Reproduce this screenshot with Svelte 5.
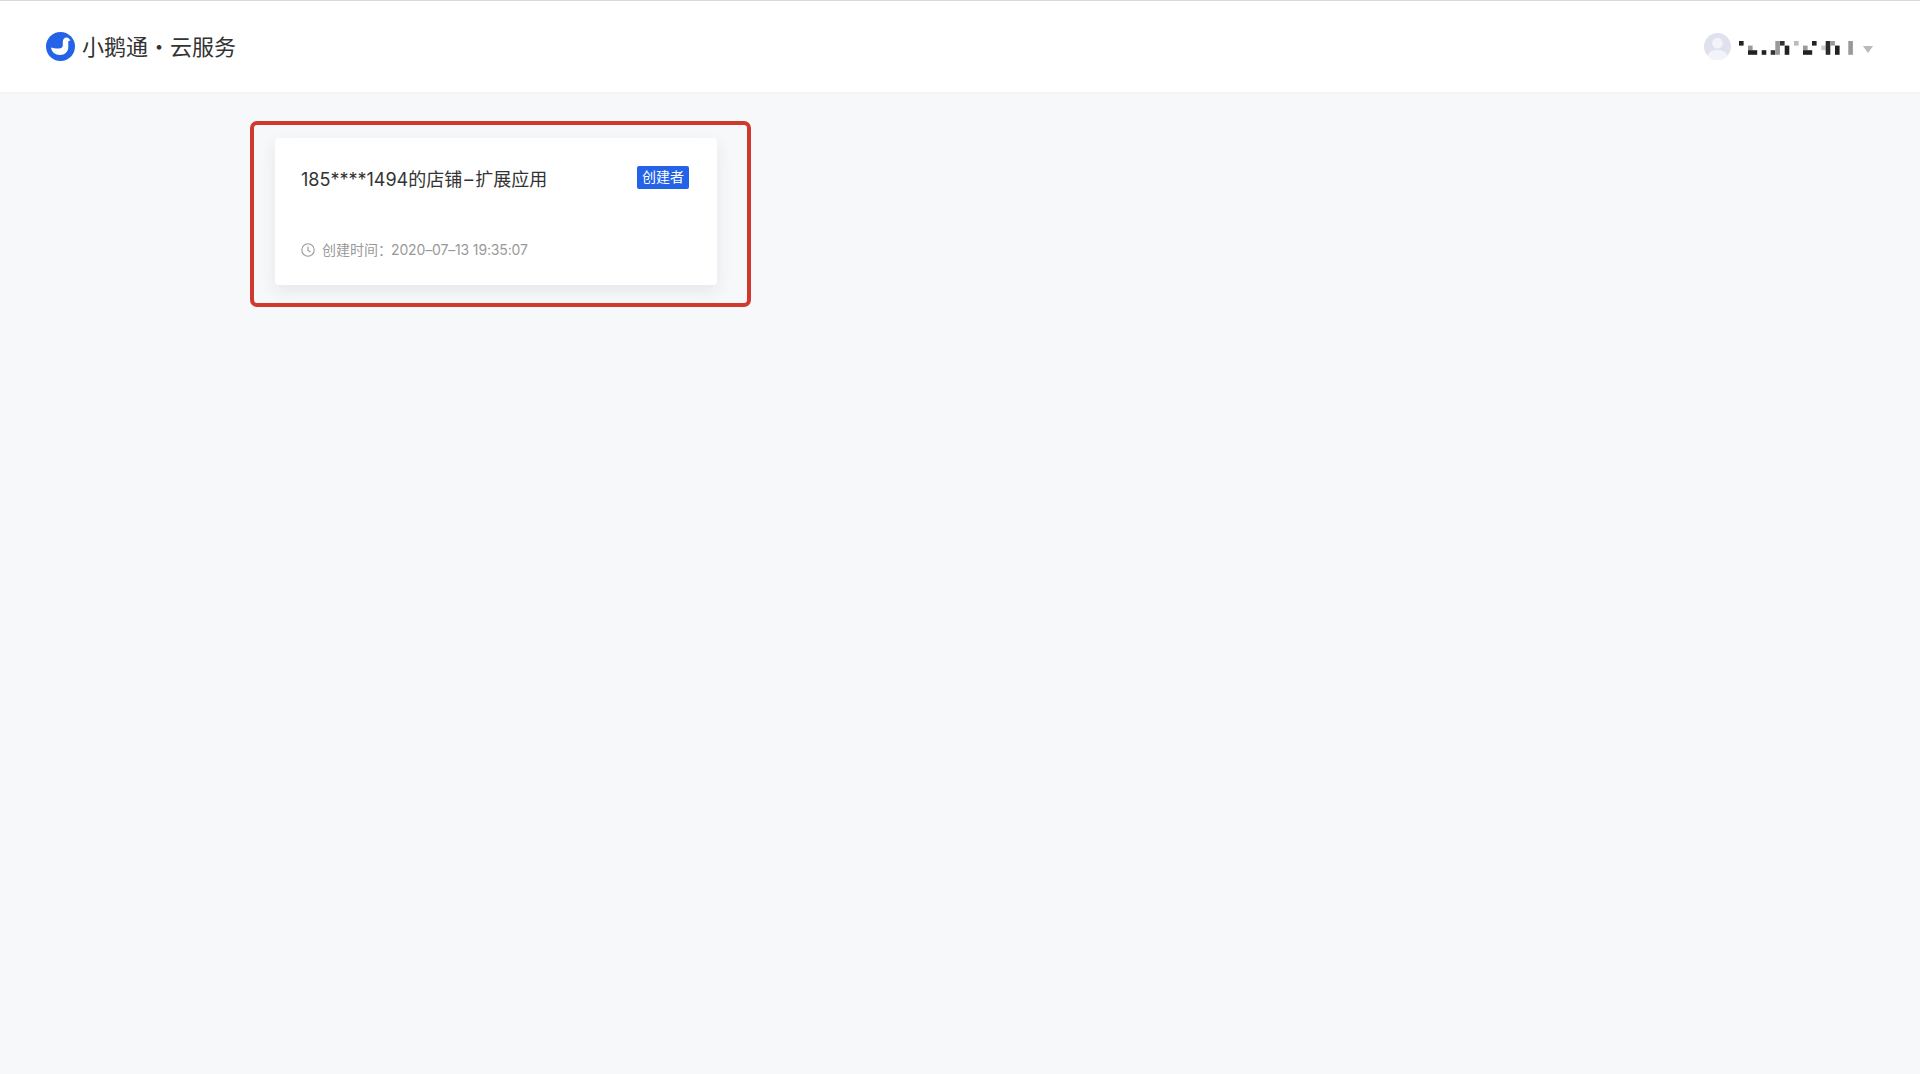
<script>
    // mosaic over the account name: [x, y, w, h, colour]
    const mosaic = [
        [0, 0, 4.6, 4.6, "#222"],
        [9, 4.6, 4.6, 4.6, "#999"],
        [9, 9.2, 9.2, 4.6, "#222"],
        [22.7, 9.2, 4.6, 4.6, "#222"],
        [31.7, 9.2, 4.6, 4.6, "#333"],
        [36.3, 0, 4.6, 13.8, "#999"],
        [41, 0, 4.6, 4.6, "#333"],
        [45.7, 4.6, 4.6, 9.2, "#222"],
        [55, 0, 4.6, 4.6, "#bbb"],
        [64, 4.6, 4.6, 4.6, "#999"],
        [64, 9.2, 9.2, 4.6, "#222"],
        [73, 0, 4.6, 4.6, "#222"],
        [82.3, 4.6, 4.6, 4.6, "#ccc"],
        [86.7, 0, 4.6, 13.8, "#2a2a2a"],
        [91.3, 0, 4.6, 4.6, "#999"],
        [96, 4.6, 4.6, 9.2, "#222"],
        [109.3, 0, 4.6, 13.8, "#999"]
    ];
</script>

<div class="page">
    <header class="topbar">
        <div class="brand">
            <svg class="logo" viewBox="0 0 29 29" width="29" height="29">
                <circle cx="14.5" cy="14.5" r="14.5" fill="#2462e8" />
                <path
                    d="M5 15.5c3 1.200 7 1.400 9.500.7 1.600-.5 2.300-1.600 2.300-3V9.500c0-2.300 1.500-4 3.500-4 1.200 0 2.100.5 2.700 1.300l1.500 1.400-2.200 1.100V15c0 4.600-3.400 8-8.300 8-4.800 0-8.500-3-9-7.500z"
                    fill="#fff"
                />
            </svg>
            <span class="brand-name">小鹅通・云服务</span>
        </div>
        <div class="account">
            <svg class="avatar" viewBox="0 0 28 28" width="27" height="27">
                <circle cx="14" cy="14" r="14" fill="#dfe1ef" />
                <circle cx="14" cy="10.500" r="5.500" fill="#f3f4fa" />
                <path d="M3.500 23.500c2-4.500 6-6 10.500-6s8.500 1.500 10.500 6a14 14 0 0 1-21 0z" fill="#f3f4fa" />
            </svg>
            <svg class="mosaic" viewBox="0 0 114 14" width="114" height="14">
                {#each mosaic as [x, y, w, h, colour]}
                    <rect {x} {y} width={w} height={h} fill={colour} />
                {/each}
            </svg>
            <span class="caret"></span>
        </div>
    </header>

    <main class="content">
        <section class="card">
            <div class="card-head">
                <h3 class="card-title">185****1494的店铺<span class="dash">–</span>扩展应用</h3>
                <span class="badge">创建者</span>
            </div>
            <div class="card-foot">
                <svg viewBox="0 0 14 14" width="14" height="14" fill="none" stroke="#999" stroke-width="1.100">
                    <circle cx="7" cy="7" r="6.200" />
                    <path d="M7 3.500V7.500L9.500 9" />
                </svg>
                <span>创建时间：</span>
                <span class="created">2020–07–13 19:35:07</span>
            </div>
            <!-- red annotation drawn round the card -->
            <div class="annotation"></div>
        </section>
    </main>
</div>

<style>
    :global(body) {
        background-color: #f7f8fa;
        font-family: "Inter", "Noto Sans CJK SC", sans-serif;
    }
    .page {
        min-height: 1074px;
        display: flex;
        flex-direction: column;
    }
    .topbar {
        height: 92px;
        box-sizing: border-box;
        display: flex;
        align-items: center;
        justify-content: space-between;
        padding: 0 47px 0 46px;
        background-color: #fff;
        border-top: 1px solid #d9d9d9;
        box-shadow: 0 1px 3px rgba(0, 0, 0, 0.03);
    }
    .brand {
        display: flex;
        align-items: center;
        gap: 7px;
    }
    .brand-name {
        margin-top: -4px;
        font-size: 22px;
        color: #333;
        font-family: "Noto Sans CJK SC", sans-serif;
    }
    .account {
        display: flex;
        align-items: center;
    }
    .mosaic {
        margin: 3px 0 0 8px;
    }
    .caret {
        margin: 5px 0 0 10px;
        border-left: 5.5px solid transparent;
        border-right: 5.5px solid transparent;
        border-top: 7px solid #bbb;
    }
    .content {
        padding: 46px 0 0 275px;
    }
    .card {
        position: relative;
        width: 442px;
        height: 147px;
        box-sizing: border-box;
        padding: 29px 28px 0 26px;
        background-color: #fff;
        border-radius: 4px;
        box-shadow: 0 6px 16px rgba(40, 50, 80, 0.09);
    }
    .card-head {
        display: flex;
        justify-content: space-between;
        align-items: flex-start;
    }
    .card-title {
        margin: 0;
        font-size: 18px;
        font-weight: 400;
        line-height: 26px;
        color: #333;
    }
    .dash {
        margin: 0 2px;
    }
    .badge {
        width: 52px;
        height: 23px;
        margin-top: -1px;
        text-align: center;
        font-size: 14px;
        line-height: 22px;
        color: #fff;
        background-color: #2462e8;
        border-radius: 2px;
    }
    .card-foot {
        display: flex;
        align-items: center;
        margin-top: 47px;
        font-size: 14px;
        line-height: 20px;
        color: #999;
    }
    .card-foot svg {
        margin-right: 7px;
    }
    .created {
        margin-left: -1px;
        letter-spacing: -0.15px;
    }
    .annotation {
        position: absolute;
        left: -25px;
        top: -17px;
        width: 501px;
        height: 186px;
        box-sizing: border-box;
        border: 4px solid #d03a2e;
        border-radius: 7px;
    }
</style>
